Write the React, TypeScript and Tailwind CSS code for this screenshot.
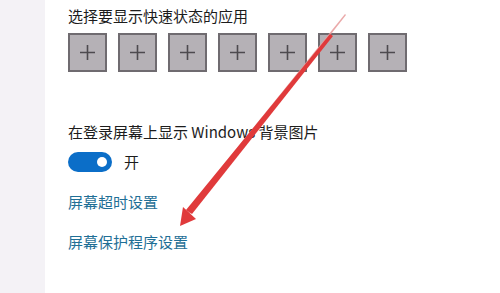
import React from 'react';

const slots = [0, 1, 2, 3, 4, 5, 6];

function AddSlot() {
  return (
    <button className="w-[39px] h-[39px] bg-[#b5b1b6] border-2 border-[#6f6b70] flex items-center justify-center">
      <svg width="17" height="17" viewBox="0 0 17 17">
        <path d="M8.5 1v15M1 8.5h15" stroke="#4d4a4f" strokeWidth="1.6" />
      </svg>
    </button>
  );
}

export default function App() {
  return (
    <div
      className="relative w-[500px] h-[293px] flex bg-white overflow-hidden"
      style={{ fontFamily: '"Noto Sans CJK SC", "Noto Sans", sans-serif' }}
    >
      {/* Side nav strip */}
      <div className="w-[45px] shrink-0 bg-[#f4f2f6]" />

      <div className="flex-1 pl-[23px] pt-[6px] text-[15px] leading-[20px] text-[#1c1c1c]">
        <div>选择要显示快速状态的应用</div>
        <div className="mt-[7px] flex gap-[11px]">
          {slots.map((i) => (
            <AddSlot key={i} />
          ))}
        </div>

        <div className="mt-[50px]">在登录屏幕上显示 Windows 背景图片</div>
        <div className="mt-[10px] flex items-center gap-[12px]">
          <div className="w-[44px] h-[20px] rounded-full bg-[#0b6ec8] flex items-center justify-end pr-[5px]">
            <span className="w-[10px] h-[10px] rounded-full bg-white" />
          </div>
          <span>开</span>
        </div>

        <div className="mt-[20px] text-[#1f6f96]">屏幕超时设置</div>
        <div className="mt-[20px] text-[#1f6f96]">屏幕保护程序设置</div>
      </div>

      {/* Annotation arrow */}
      <svg className="absolute inset-0 pointer-events-none" width="500" height="293" viewBox="0 0 500 293">
        <polygon points="345,14 346,15 190,214 186,211" fill="#e8a0a0" opacity="0.9" />
        <polygon points="330,34 333,36 192,214 186,210" fill="#e03a3b" />
        <polygon points="180,226 183,207 196,219" fill="#e03a3b" />
      </svg>
    </div>
  );
}
